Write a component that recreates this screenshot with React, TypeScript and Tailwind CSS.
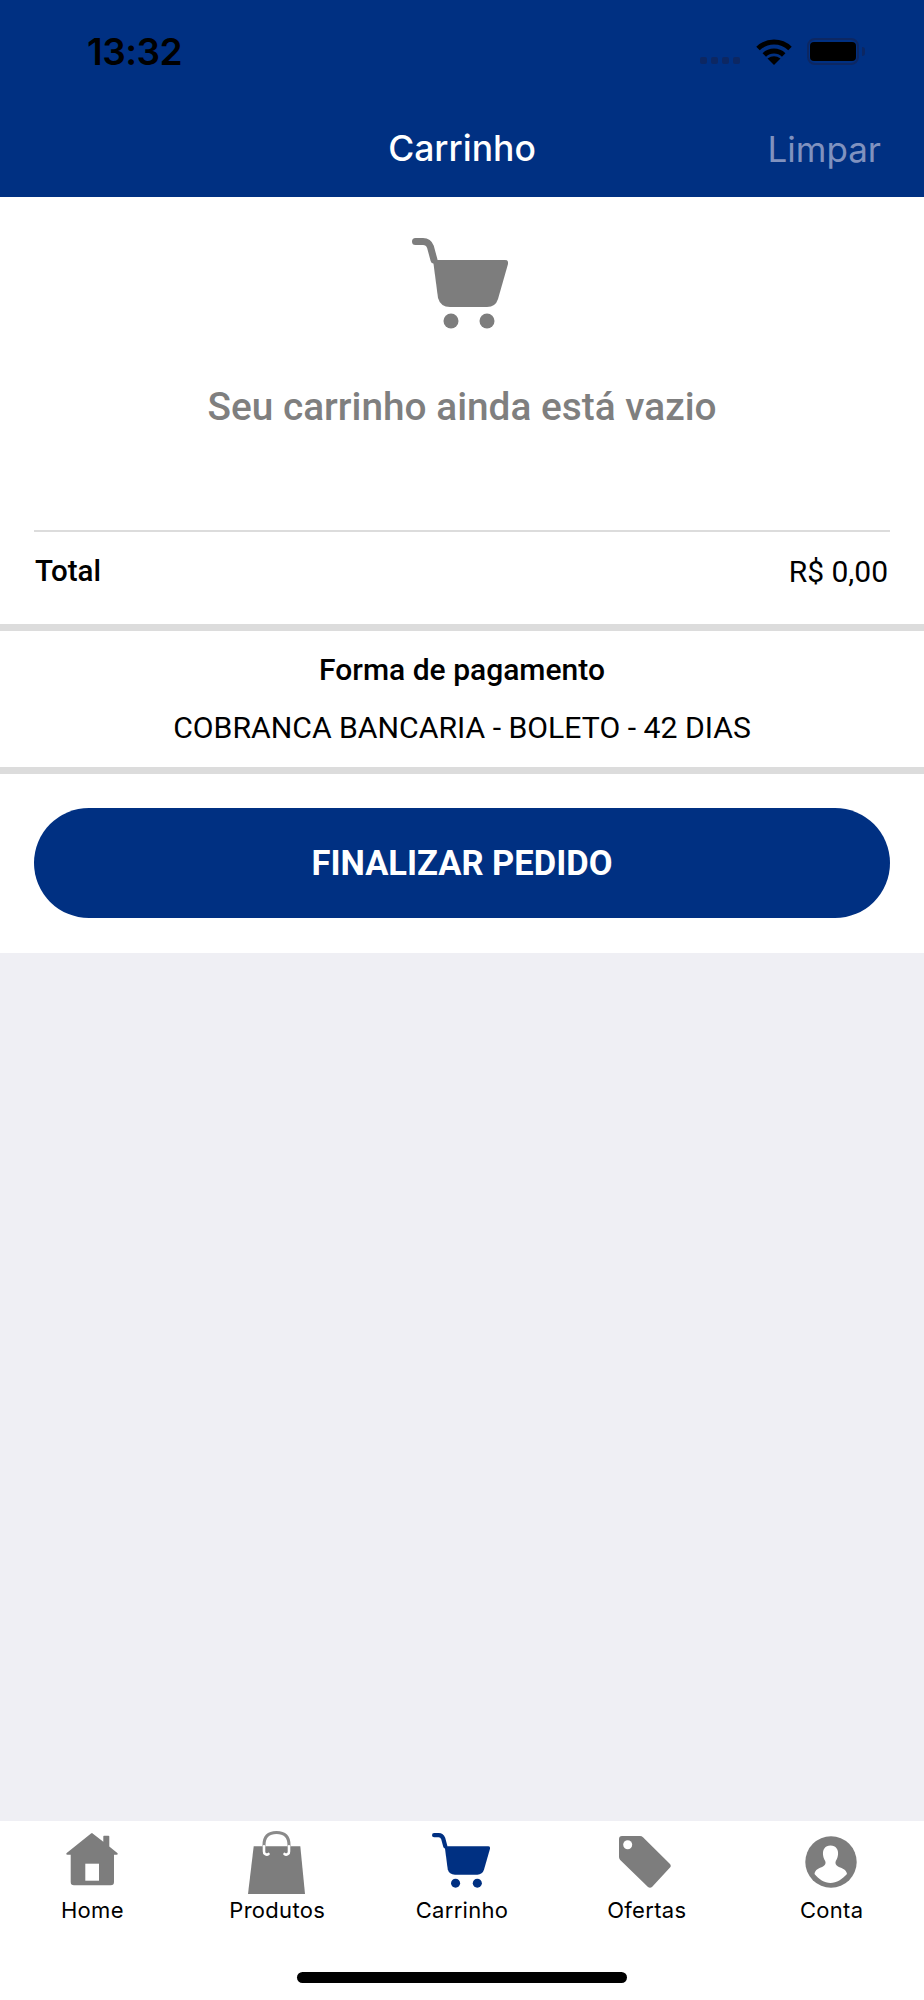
import React from "react";

const CartIcon = ({ color, className }: { color: string; className: string }) => (
  <svg viewBox="0 0 96 91" className={className} fill={color}>
    <path d="M3.5 3.5H11Q16.5 3.5 18.5 9L22 22" fill="none" stroke={color} strokeWidth="7" strokeLinecap="round" />
    <path d="M21 22H93Q97 22 96 26L86 61Q83.5 69 75 69H38Q28.5 69 26 60Z" />
    <circle cx="39" cy="83" r="7.5" />
    <circle cx="75" cy="83" r="7.5" />
  </svg>
);

const Home = () => (
  <svg viewBox="0 0 52 53" className="w-[52px] h-[53px]" fill="#7d7d7d">
    <path d="M26 0L37.3 8.7V3.5Q37.3 2.7 38 2.7H42.5Q43.3 2.7 43.3 3.5V13.6L51.3 20Q52.5 21.7 50.5 21.7H48V49Q48 52.3 44.7 52.3H8Q4.7 52.3 4.7 49V21.7H1.5Q-.5 21.7.7 20L25 .5Z" />
    <rect x="19.3" y="30.7" width="13.7" height="17" fill="#fff" />
  </svg>
);

const Bag = () => (
  <svg viewBox="0 0 57 63" className="w-[57px] h-[63px] mr-[2px]">
    <path d="M5.7 15.3H52.3L57 63H0Z" fill="#7d7d7d" />
    <path d="M16 15.3V14C16 5 21 1.5 28.5 1.5S41 5 41 14V15.3" fill="none" stroke="#8a8a8a" strokeWidth="3" />
    <path d="M16 15.3V20.5A2.8 2.8 0 0 0 20.5 23M41 15.3V20.5A2.8 2.8 0 0 1 36.5 23" fill="none" stroke="#fff" strokeWidth="2.6" strokeLinecap="round" />
  </svg>
);

const Tag = () => (
  <svg viewBox="0 0 52 52" className="w-[52px] h-[52px] mr-[3px]" fill="#7d7d7d">
    <path d="M3 0H21Q22.7 0 24 1.2L51 28Q52.5 30 51 31.5L33 51Q31 52.5 29 51L1.2 24Q0 22.7 0 21V3Q0 0 3 0Z" />
    <circle cx="8.7" cy="8.7" r="4.5" fill="#fff" />
  </svg>
);

const Account = () => (
  <svg viewBox="0 0 52 52" className="w-[52px] h-[52px] mr-[2px]">
    <circle cx="26" cy="26" r="25.7" fill="#7d7d7d" />
    <path d="M25.5 9.5C31 9.5 33.5 13.5 33 18.5C32.8 21 32 23 30.8 25C30 27 30.5 29 33 30.5C37 32.3 41.5 33.5 42 38C37.5 43 31.5 47 25.5 47C19.5 47 13.5 43 9.5 38C10 33.5 14 32.3 18 30.5C20.5 29 21 27 20.2 25C19 23 18.2 21 18 18.5C17.5 13.5 20 9.5 25.5 9.5Z" fill="#fff" />
  </svg>
);

const Wifi = () => (
  <svg viewBox="0 0 36 27" className="w-[36px] h-[27px]" fill="none" stroke="#000" strokeWidth="5">
    <path d="M2 10.5A23 23 0 0 1 34 10.5" />
    <path d="M8.3 17A14 14 0 0 1 27.7 17" />
    <path d="M18 27L11.5 20.5Q18 16 24.5 20.5Z" fill="#000" stroke="none" />
  </svg>
);

const tabs = [
  { label: "Home", icon: <Home />, pad: "pt-[12px]" },
  { label: "Produtos", icon: <Bag />, pad: "pt-[10px]" },
  { label: "Carrinho", icon: <CartIcon color="#003082" className="w-[58px] h-[55px] mr-[2px]" />, pad: "pt-[12px]" },
  { label: "Ofertas", icon: <Tag />, pad: "pt-[15px]" },
  { label: "Conta", icon: <Account />, pad: "pt-[15px]" },
];

export default function App() {
  return (
    <div className="w-[924px] h-[2000px] flex flex-col bg-[#efeff4] font-['Roboto',sans-serif] overflow-hidden">
      <header className="h-[197px] shrink-0 bg-[#003082] flex flex-col font-['Inter',sans-serif]">
        <div className="h-[127px] flex items-start justify-between pl-[87px] pr-[59px] pt-[30px]">
          <span className="text-[37px] leading-[44px] font-semibold text-black tracking-[-0.5px]">13:32</span>
          <div className="flex items-start pt-[8px]">
            <div className="flex gap-[4px] mt-[19px] mr-[16px]">
              {[0, 1, 2, 3].map((i) => (
                <span key={i} className="w-[7px] h-[7px] rounded-[2px] bg-[#0c2763]" />
              ))}
            </div>
            <Wifi />
            <div className="flex items-center ml-[15px]">
              <div className="w-[52px] h-[27px] rounded-[8px] border-2 border-[#0c2763] px-[1px] py-[2px]">
                <div className="w-full h-full rounded-[4px] bg-black" />
              </div>
              <span className="ml-[3px] w-[3px] h-[9px] rounded-r-[3px] bg-[#0c2763]" />
            </div>
          </div>
        </div>
        <div className="h-[70px] grid grid-cols-[1fr_auto_1fr] items-start pr-[43px]">
          <span />
          <span className="text-[35.5px] leading-[44px] font-medium text-white pl-[43px]">Carrinho</span>
          <span className="justify-self-end text-[35px] leading-[44px] text-[#8092bf]">Limpar</span>
        </div>
      </header>

      <main className="bg-white shrink-0 flex flex-col">
        <div className="flex flex-col items-center pt-[41px]">
          <CartIcon color="#7d7d7d" className="w-[96px] h-[91px] mr-[4px]" />
          <p className="mt-[56px] text-[38.8px] leading-[44px] font-medium text-[#7f7f7f]">Seu carrinho ainda está vazio</p>
        </div>
        <div className="mx-[34px] mt-[101px] h-[2px] bg-[#dcdcdc]" />
        <div className="h-[92px] pl-[35px] pr-[36px] pb-[14px] flex items-center justify-between text-[29.5px]">
          <span className="font-medium text-black">Total</span>
          <span className="text-[30px] text-black">R$ 0,00</span>
        </div>
        <div className="h-[7px] bg-[#dcdcdc]" />
        <div className="h-[136px] flex flex-col items-center pt-[17px] gap-[14px] text-[30px] leading-[44px] text-black">
          <span className="font-medium">Forma de pagamento</span>
          <span className="text-[30.2px]">COBRANCA BANCARIA - BOLETO - 42 DIAS</span>
        </div>
        <div className="h-[7px] bg-[#dcdcdc]" />
        <div className="px-[34px] pt-[34px] pb-[35px]">
          <button className="w-full h-[110px] pt-[2px] rounded-[55px] bg-[#003082] text-white text-[34.5px] font-bold">FINALIZAR PEDIDO</button>
        </div>
      </main>

      <div className="flex-1" />

      <nav className="h-[179px] shrink-0 bg-white flex flex-col">
        <div className="grid grid-cols-5 h-[113px]">
          {tabs.map((t) => (
            <div key={t.label} className="flex flex-col items-center">
              <div className={`h-[74px] flex flex-col items-center ${t.pad}`}>{t.icon}</div>
              <span className="text-[22px] leading-[30px] tracking-[0.3px] font-['Inter',sans-serif] text-black">{t.label}</span>
            </div>
          ))}
        </div>
        <div className="flex justify-center pt-[38px]">
          <div className="w-[330px] h-[11px] rounded-full bg-black" />
        </div>
      </nav>
    </div>
  );
}
